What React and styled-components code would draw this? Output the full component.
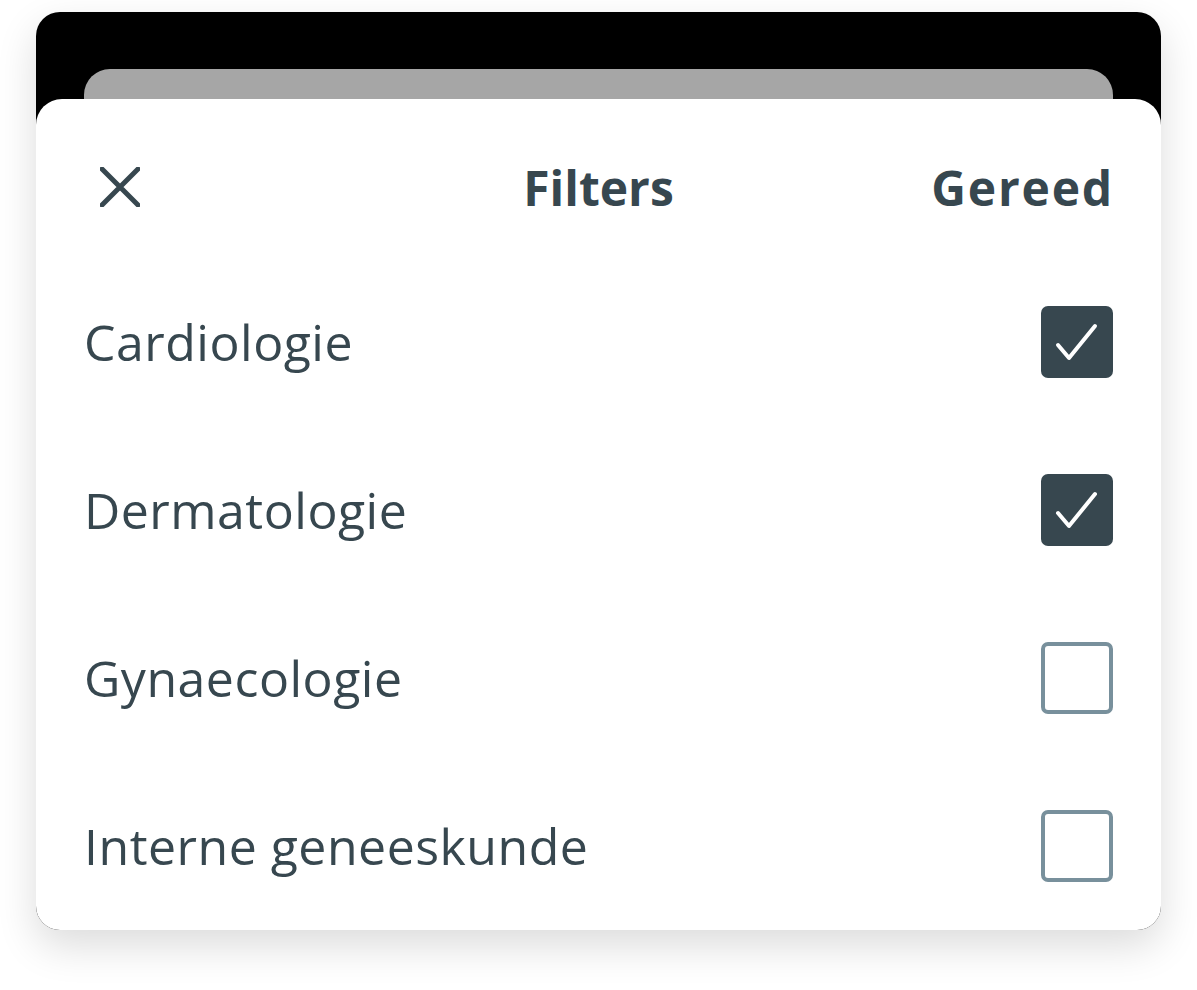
import React, { useState } from 'react';
import styled, { createGlobalStyle } from 'styled-components';

const GlobalStyle = createGlobalStyle`
  body {
    margin: 0;
    background: #fff;
    font-family: "Open Sans", "Liberation Sans", sans-serif;
  }
`;

const ink = '#37474f';

const Page = styled.div`
  padding: 12px 36px 60px;
`;

const Card = styled.div`
  width: 1125px;
  background: #000;
  border-radius: 24px;
  overflow: hidden;
  box-shadow: 0 16px 40px rgba(0, 0, 0, 0.14);
  display: flex;
  flex-direction: column;
  padding-top: 57px;
`;

const BackSheet = styled.div`
  height: 30px;
  margin: 0 48px;
  background: #a6a6a6;
  border-radius: 26px 26px 0 0;
`;

const Sheet = styled.div`
  height: 831px;
  background: #fff;
  border-radius: 26px 26px 0 0;
  display: flex;
  flex-direction: column;
  padding: 0 48px 0 48px;
`;

const Header = styled.div`
  box-sizing: border-box;
  height: 159px;
  padding-top: 17px;
  display: grid;
  grid-template-columns: 1fr auto 1fr;
  align-items: center;
`;

const CloseButton = styled.button`
  justify-self: start;
  border: 0;
  background: none;
  padding: 0;
  margin-left: 16px;
  width: 40px;
  height: 40px;
  display: flex;
  cursor: pointer;
`;

const Title = styled.h1`
  margin: 0;
  font-size: 48px;
  font-weight: 700;
  color: ${ink};
`;

const Done = styled.button`
  justify-self: end;
  border: 0;
  background: none;
  padding: 0;
  font-family: inherit;
  font-size: 48px;
  font-weight: 700;
  letter-spacing: 1.8px;
  margin-right: -1px;
  color: ${ink};
  cursor: pointer;
`;

const Row = styled.label`
  height: 168px;
  display: flex;
  align-items: center;
  justify-content: space-between;
  cursor: pointer;
`;

const Label = styled.span`
  font-size: 50px;
  letter-spacing: 0.5px;
  color: ${ink};
`;

const Box = styled.span`
  box-sizing: border-box;
  width: 72px;
  height: 72px;
  border-radius: 7px;
  display: flex;
  background: ${({ checked }) => (checked ? ink : '#fff')};
  border: ${({ checked }) => (checked ? 'none' : '4px solid #78909c')};
`;

const items = [
  { name: 'Cardiologie', checked: true },
  { name: 'Dermatologie', checked: true },
  { name: 'Gynaecologie', checked: false },
  { name: 'Interne geneeskunde', checked: false },
];

const App = () => {
  const [state, setState] = useState(items);
  const toggle = (i) =>
    setState((s) => s.map((it, j) => (j === i ? { ...it, checked: !it.checked } : it)));

  return (
    <Page>
      <GlobalStyle />
      <Card>
        <BackSheet />
        <Sheet>
          <Header>
            <CloseButton aria-label="Sluiten">
              <svg width="40" height="40" viewBox="0 0 40 40">
                <path d="M2 2 L38 38 M38 2 L2 38" stroke={ink} strokeWidth="5" strokeLinecap="round" fill="none" />
              </svg>
            </CloseButton>
            <Title>Filters</Title>
            <Done>Gereed</Done>
          </Header>
          {state.map((it, i) => (
            <Row key={it.name} onClick={() => toggle(i)}>
              <Label>{it.name}</Label>
              <Box checked={it.checked}>
                {it.checked && (
                  <svg width="72" height="72" viewBox="0 0 72 72">
                    <path d="M17 39 L28 52 L54 20" stroke="#fff" strokeWidth="4" strokeLinecap="round" strokeLinejoin="round" fill="none" />
                  </svg>
                )}
              </Box>
            </Row>
          ))}
        </Sheet>
      </Card>
    </Page>
  );
};

export default App;
